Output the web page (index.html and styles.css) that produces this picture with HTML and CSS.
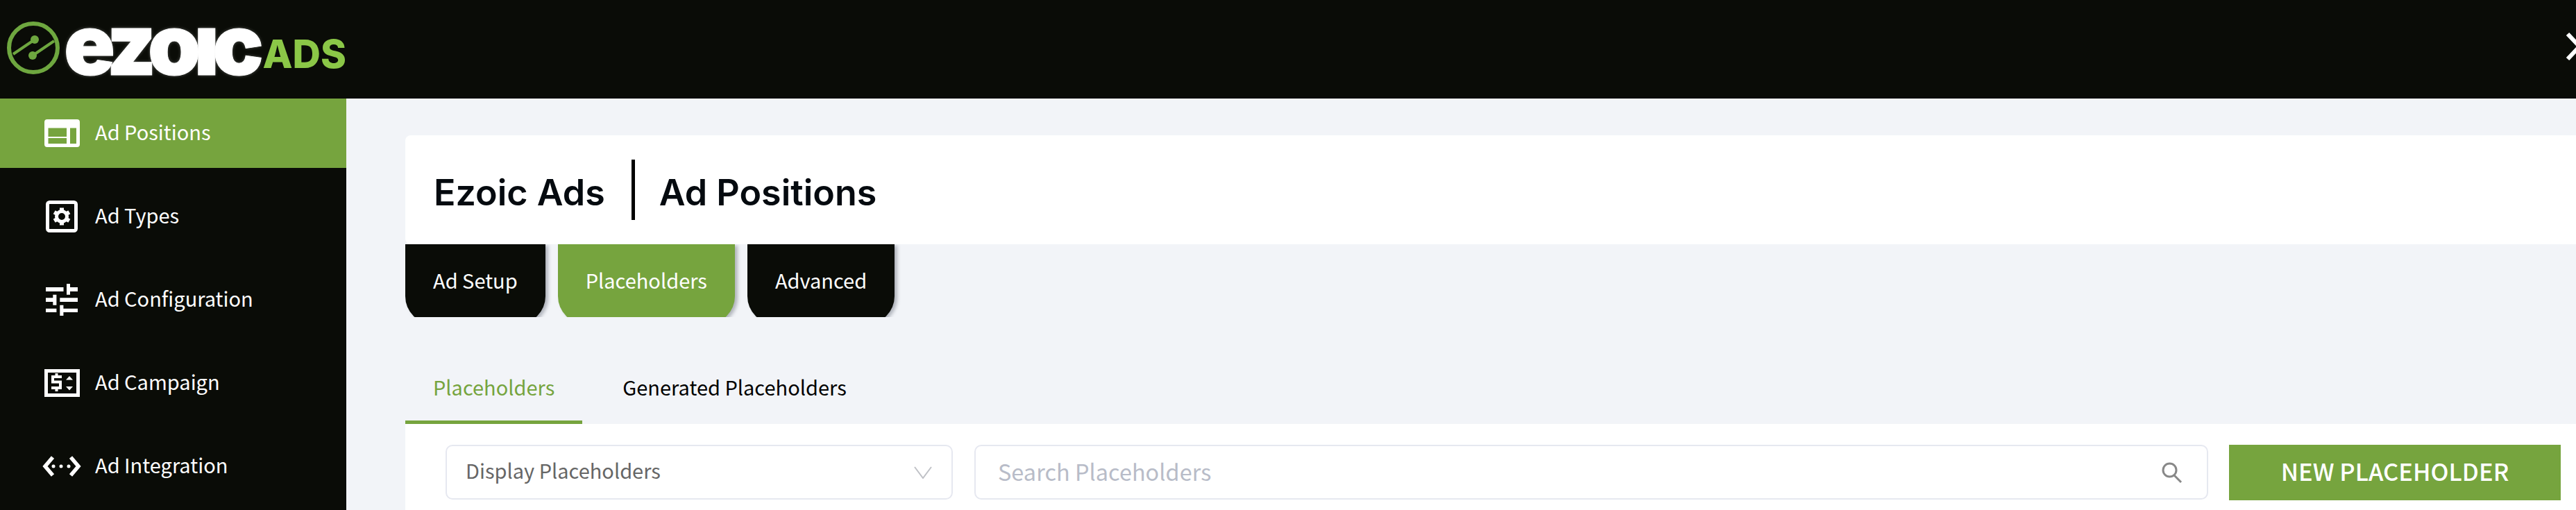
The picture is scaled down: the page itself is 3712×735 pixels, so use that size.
FILE: index.html
```html
<!DOCTYPE html>
<html lang="en">
  <head>
    <meta charset="UTF-8" />
    <meta name="viewport" content="width=device-width, initial-scale=1.0" />
    <title>Ezoic Ads - Ad Positions</title>
    <link rel="stylesheet" href="styles.css">
  </head>
  <body>
    <header class="topbar">
      <div class="logo">
        <svg class="logo-mark" viewBox="0 0 80 80" width="80" height="80">
          <circle cx="40" cy="40" r="35" fill="none" stroke="#6ea73f" stroke-width="6" />
          <path d="M11 49 42 28M39 51 70 30" fill="none" stroke="#6ea73f" stroke-width="4" />
          <circle cx="42" cy="28" r="6" fill="#6ea73f" />
          <circle cx="39" cy="51" r="6" fill="#6ea73f" />
        </svg>
        <span class="logo-word">ezoıc</span>
        <span class="logo-ads">ADS</span>
      </div>
      <svg class="close-icon" viewBox="0 0 40 40" width="40" height="40">
        <path d="M3 2 37 38M37 2 3 38" stroke="#fff" stroke-width="6" fill="none" />
      </svg>
    </header>

    <div class="layout">
      <nav class="sidebar">
        <a class="nav-item active">
          <span class="nav-icon">
            <svg viewBox="0 0 51 40" width="51" height="40">
              <path fill="#fff" fill-rule="evenodd" d="M4 0H47A4 4 0 0 1 51 4V36A4 4 0 0 1 47 40H4A4 4 0 0 1 0 36V4A4 4 0 0 1 4 0ZM5.500 12.500V25H32V12.500ZM5.500 27V35H32V27ZM37 12.500V35H46V12.500Z" />
            </svg>
          </span>
          Ad Positions
        </a>
        <a class="nav-item">
          <span class="nav-icon">
            <svg viewBox="0 0 46 46" width="46" height="46">
              <rect x="2.500" y="2.500" width="41" height="41" rx="3" fill="none" stroke="#fff" stroke-width="5" />
              <circle cx="23" cy="23" r="7.500" fill="none" stroke="#fff" stroke-width="5" />
              <g fill="#fff">
                <rect x="20" y="10.500" width="6" height="4" />
                <rect x="20" y="10.500" width="6" height="4" transform="rotate(60 23 23)" />
                <rect x="20" y="10.500" width="6" height="4" transform="rotate(120 23 23)" />
                <rect x="20" y="10.500" width="6" height="4" transform="rotate(180 23 23)" />
                <rect x="20" y="10.500" width="6" height="4" transform="rotate(240 23 23)" />
                <rect x="20" y="10.500" width="6" height="4" transform="rotate(300 23 23)" />
              </g>
            </svg>
          </span>
          Ad Types
        </a>
        <a class="nav-item">
          <span class="nav-icon">
            <svg viewBox="0 0 46 46" width="46" height="46">
              <path fill="#fff" d="M0 5H25.500V11H0ZM30 0H35V5H46V11H35V15.700H30ZM0 20.300H10.300V15.700H15.400V30.700H10.300V26H0ZM20.300 20.300H46V26H20.300ZM0 35.700H15.400V41H0ZM20.300 30.700H25.400V35.700H46V41H25.400V46H20.300Z" />
            </svg>
          </span>
          Ad Configuration
        </a>
        <a class="nav-item">
          <span class="nav-icon">
            <svg viewBox="0 0 51 40" width="51" height="40">
              <path fill="#fff" fill-rule="evenodd" d="M0 0H51V40H0ZM5 5V35H46V5Z" />
              <path fill="#fff" d="M15.500 6H19.500V9H25V13H14V16.500H25V29H19.500V32H15.500V29H10V25H21V20.500H10V9H15.500ZM36 10 41 15.500H31ZM31 25H41L36 30.500Z" />
            </svg>
          </span>
          Ad Campaign
        </a>
        <a class="nav-item">
          <span class="nav-icon">
            <svg viewBox="0 0 56 30" width="56" height="30">
              <path d="M15 2 4 15 15 28M41 2 52 15 41 28" fill="none" stroke="#fff" stroke-width="5.500" />
              <circle cx="16" cy="15" r="2.500" fill="#fff" />
              <circle cx="27" cy="15" r="2.500" fill="#fff" />
              <circle cx="38" cy="15" r="2.500" fill="#fff" />
            </svg>
          </span>
          Ad Integration
        </a>
      </nav>

      <main class="content">
        <div class="title-card">
          <h1 class="title-part">Ezoic Ads</h1>
          <span class="title-divider"></span>
          <h1 class="title-part">Ad Positions</h1>
        </div>

        <div class="main-tabs">
          <a class="main-tab">Ad Setup</a>
          <a class="main-tab active">Placeholders</a>
          <a class="main-tab">Advanced</a>
        </div>

        <div class="sub-tabs">
          <a class="sub-tab active">Placeholders</a>
          <a class="sub-tab">Generated Placeholders</a>
        </div>

        <section class="panel">
          <div class="select-box">
            <span class="select-text">Display Placeholders</span>
            <svg viewBox="0 0 26 18" width="26" height="18">
              <path d="M1 1 13 17 25 1" fill="none" stroke="#bfc1c6" stroke-width="2" />
            </svg>
          </div>
          <div class="search-box">
            <span class="search-text">Search Placeholders</span>
            <svg viewBox="0 0 30 30" width="30" height="30">
              <circle cx="11.500" cy="11.500" r="9.500" fill="none" stroke="#888" stroke-width="3" />
              <path d="M18 19 28 29" fill="none" stroke="#888" stroke-width="3" />
            </svg>
          </div>
          <button class="new-btn">NEW PLACEHOLDER</button>
        </section>
      </main>
    </div>
  </body>
</html>
```

FILE: styles.css
```css
html,
body {
  height: 735px;
  overflow: hidden;
}

body {
  margin: 0;
  background-color: #f2f4f8;
  font-family: "Noto Sans CJK JP", "Noto Sans", sans-serif;
  color: #000;
}

.topbar {
  height: 142px;
  background-color: #0a0c07;
  display: flex;
  align-items: center;
  justify-content: space-between;
}

.logo {
  display: flex;
  align-items: center;
  padding-left: 8px;
}

.logo-mark {
  flex: none;
  margin-top: -4px;
}

.logo-word {
  font-family: Inter, sans-serif;
  font-weight: 900;
  font-size: 122px;
  line-height: 100px;
  letter-spacing: -9.500px;
  color: #fff;
  -webkit-text-stroke: 1px #fff;
  text-shadow: 0 0 5px rgba(255, 255, 255, 0.35);
  margin-left: 4px;
  margin-top: -14px;
}

.logo-ads {
  font-family: Inter, sans-serif;
  font-weight: 800;
  font-size: 56px;
  line-height: 70px;
  color: #8bc747;
  margin-left: 8px;
  margin-top: 14px;
}

.close-icon {
  flex: none;
  margin-right: -25px;
  margin-top: -8px;
}

.layout {
  display: flex;
  height: 593px;
}

.sidebar {
  width: 499px;
  flex: none;
  background-color: #0a0c07;
  display: flex;
  flex-direction: column;
  gap: 20px;
}

.nav-item {
  height: 100px;
  flex: none;
  display: flex;
  align-items: flex-start;
  color: #fff;
  font-size: 29px;
  line-height: 94px;
}

.nav-item.active {
  background-color: #76a43e;
}

.nav-icon {
  width: 56px;
  height: 100px;
  margin: 0 20px 0 61px;
  flex: none;
  display: flex;
  align-items: center;
  justify-content: center;
}

.nav-icon svg {
  display: block;
}

.content {
  flex: 1;
  min-width: 0;
  padding: 53px 0 0 85px;
}

.title-card {
  height: 157px;
  background-color: #fff;
  border-radius: 8px 0 0 8px;
  display: flex;
  align-items: center;
  padding-left: 41px;
  position: relative;
  z-index: 1;
}

.title-part {
  margin: 8px 0 0;
  font-family: Inter, sans-serif;
  font-size: 52px;
  font-weight: 600;
  color: #050a0f;
}

.title-divider {
  width: 5px;
  height: 87px;
  background-color: #000;
  margin: 0 35px 0 38px;
}

/* tabs run on below the row and are cut off by it */
.main-tabs {
  display: flex;
  gap: 18px;
  height: 105px;
  overflow: hidden;
  padding-right: 10px;
}

.main-tab {
  height: 115px;
  padding: 0 40px;
  box-sizing: border-box;
  display: flex;
  align-items: flex-start;
  line-height: 102px;
  border-radius: 0 0 40px 40px;
  background-color: #0a0c07;
  color: #fff;
  font-size: 29px;
  box-shadow: 4px 2px 5px rgba(80, 85, 100, 0.4);
}

.main-tab.active {
  background-color: #76a43e;
}

.sub-tabs {
  display: flex;
  height: 154px;
  box-sizing: border-box;
  padding-top: 69px;
}

.sub-tab {
  height: 85px;
  box-sizing: border-box;
  padding: 0 40px;
  line-height: 63px;
  font-size: 29px;
  border-bottom: 5px solid transparent;
}

.sub-tab.active {
  color: #76a43e;
  border-bottom-color: #76a43e;
}

.sub-tab + .sub-tab {
  padding-left: 58px;
}

.panel {
  background-color: #fff;
  height: 124px;
  display: flex;
  align-items: flex-start;
  padding: 30px 22px 0 58px;
}

.select-box,
.search-box {
  height: 79px;
  box-sizing: border-box;
  border: 2px solid #e6e8f0;
  border-radius: 10px;
  display: flex;
  align-items: center;
  justify-content: space-between;
}

.select-box {
  width: 731px;
  padding: 0 28px 0 27px;
}

.select-text {
  font-size: 29px;
  color: #666;
  margin-bottom: 7px;
}

.search-box {
  flex: 1;
  margin-left: 31px;
  padding: 0 35px 0 32px;
}

.search-text {
  font-size: 32.500px;
  color: #b8bcc8;
  margin-bottom: 5px;
}

.new-btn {
  width: 478px;
  height: 80px;
  margin-left: 30px;
  border: none;
  background-color: #76a43e;
  color: #fff;
  font-family: inherit;
  font-size: 34.500px;
  font-weight: 500;
  padding: 0 0 7px;
}
```
